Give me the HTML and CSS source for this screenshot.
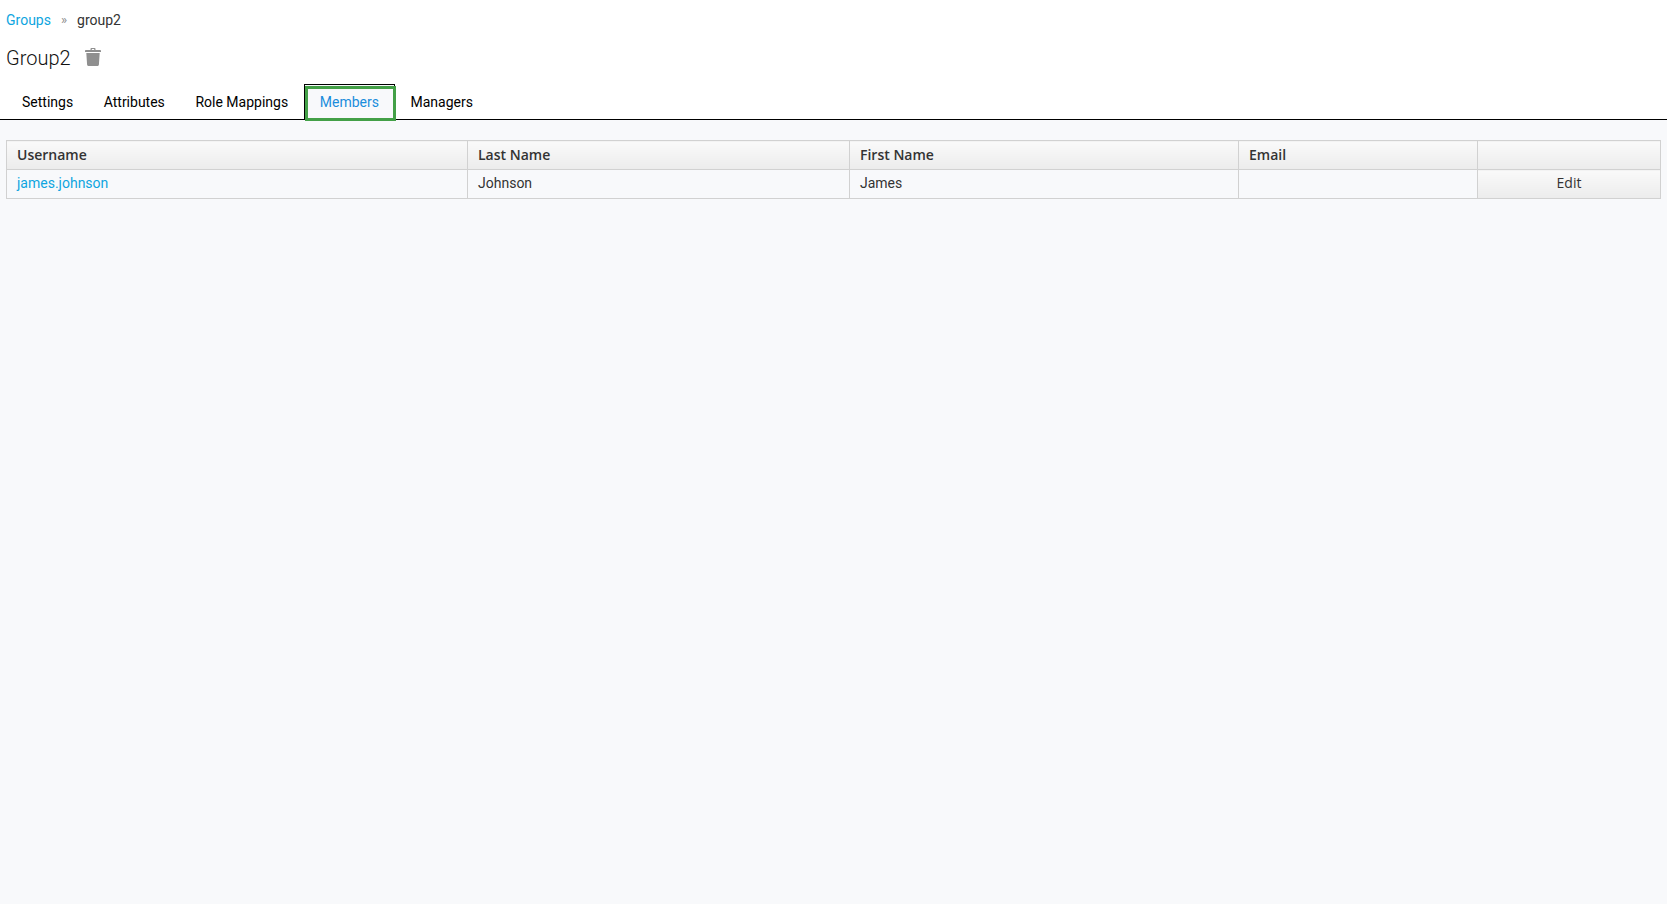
FILE: index.html
```html
<!DOCTYPE html>
<html lang="en">
<head>
<meta charset="utf-8">
<title>Group2</title>
<link rel="stylesheet" href="styles.css">
</head>
<body>
<header class="top">
  <nav class="crumbs">
    <a class="link" href="#">Groups</a>
    <span class="sep">»</span>
    <span>group2</span>
  </nav>
  <div class="title-row">
    <h1 class="title">Group2</h1>
    <svg class="trash" width="16" height="18" viewBox="0 0 16 18" aria-hidden="true">
      <path d="M5.500 2V.8C5.500.4 5.900 0 6.300 0h3.400c.4 0 .8.4.8.8V2H15c.5 0 1 .4 1 1v1H0V3c0-.6.5-1 1-1h4.500zM6.800 1.100V2h2.400v-.9H6.800z" fill="#8f8f8f" fill-rule="evenodd"/>
      <path d="M1.300 5h13.400l-.8 11.800c0 .7-.6 1.200-1.200 1.200H3.300c-.6 0-1.200-.5-1.200-1.200L1.300 5z" fill="#8f8f8f"/>
    </svg>
  </div>
  <ul class="tabs">
    <li class="tab">Settings</li>
    <li class="tab">Attributes</li>
    <li class="tab">Role Mappings</li>
    <li class="tab tab-active">Members</li>
    <li class="tab">Managers</li>
  </ul>
</header>
<main class="content">
  <table class="grid">
    <colgroup>
      <col class="c1"><col class="c2"><col class="c3"><col class="c4"><col class="c5">
    </colgroup>
    <thead>
      <tr>
        <th>Username</th>
        <th>Last Name</th>
        <th>First Name</th>
        <th>Email</th>
        <th></th>
      </tr>
    </thead>
    <tbody>
      <tr>
        <td><a class="link" href="#">james.johnson</a></td>
        <td>Johnson</td>
        <td>James</td>
        <td></td>
        <td class="action">Edit</td>
      </tr>
    </tbody>
  </table>
</main>
</body>
</html>
```
FILE: styles.css
```css
* { box-sizing: border-box; }
html, body { height: 100%; }
body {
  margin: 0;
  display: flex;
  flex-direction: column;
  background: #f8f9fb;
  color: #333;
  font-family: Roboto, "Liberation Sans", sans-serif;
  font-size: 14px;
}
.top {
  background: #fff;
  height: 120px;
  border-bottom: 1px solid #000;
  padding: 0 6px;
}
.crumbs {
  height: 40px;
  display: flex;
  align-items: center;
  line-height: 20px;
}
.link { color: #0ea5e0; text-decoration: none; }
.sep { color: #8c8c8c; margin: 0 10px; font-size: 13px; }
.title-row {
  display: flex;
  align-items: center;
  height: 37px;
}
.title {
  margin: 0;
  font-size: 20px;
  font-weight: 300;
  color: #111;
  line-height: 37px;
}
.trash { margin-left: 14px; margin-top: -3px; }
.tabs {
  list-style: none;
  margin: 7px 0 0 0.700px;
  padding: 0;
  display: flex;
  height: 36px;
  color: #000;
}
.tab {
  padding: 0 15.300px;
  line-height: 36px;
  height: 36px;
}
.tab-active {
  color: #1a8ddc;
  background: #f8f9fb;
  border: 1px solid #000;
  border-bottom: 0;
  line-height: 35px;
  margin-left: 1px;
  padding: 0 15.300px 0 14.300px;
  position: relative;
}
.tab-active::after {
  content: "";
  position: absolute;
  top: 1px;
  left: 0;
  right: -2px;
  bottom: -1px;
  border: 3px solid #43a047;
}
.content { flex: 1; padding: 20px 6px 0; }
.grid {
  width: 1654px;
  table-layout: fixed;
  border-collapse: collapse;
}
.c1 { width: 461px; }
.c2 { width: 382px; }
.c3 { width: 389px; }
.c4 { width: 239px; }
.c5 { width: 183px; }
.grid th, .grid td {
  border: 1px solid #d1d1d1;
  padding: 0 10px 2px;
  height: 29px;
  text-align: left;
  font-size: 14px;
}
.grid th, .action {
  background: linear-gradient(#fafafa, #ececec);
  font-family: "Open Sans", "Liberation Sans", sans-serif;
  color: #333;
}
.grid th { font-weight: 600; }
.grid td.action {
  text-align: center;
  font-weight: 400;
  padding-bottom: 4px;
}
```
